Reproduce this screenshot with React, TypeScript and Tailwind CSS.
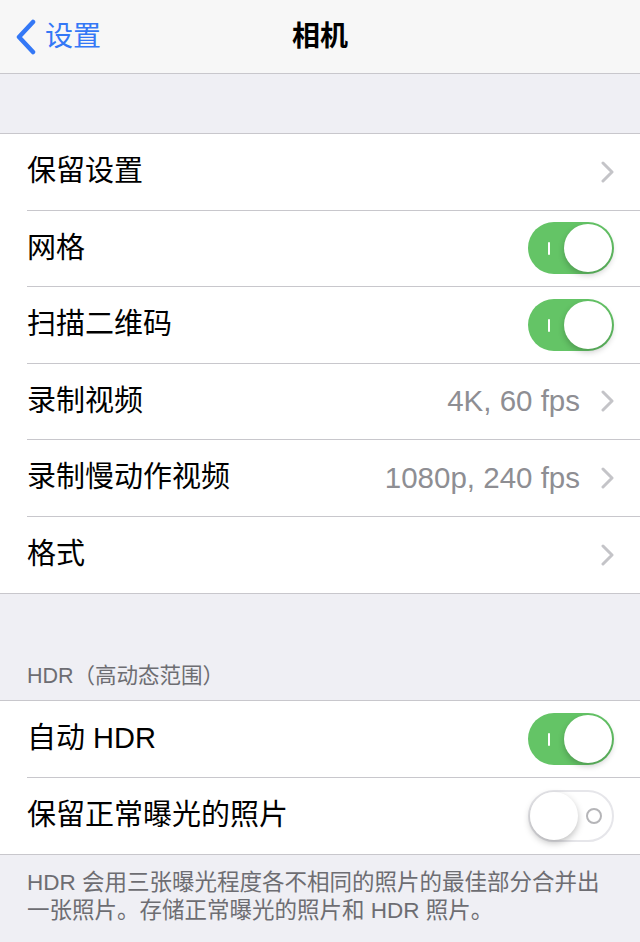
import React from "react";

const font = {
  fontFamily:
    '"Liberation Sans", "Noto Sans CJK SC", "Noto Sans", sans-serif',
};

const Chevron = () => (
  <svg width="13" height="22" viewBox="0 0 13 22" className="ml-[21px]">
    <path
      d="M2 2 L11 11 L2 20"
      fill="none"
      stroke="#c4c4c8"
      strokeWidth="3"
      strokeLinecap="round"
      strokeLinejoin="round"
    />
  </svg>
);

const Toggle = ({ on }: { on: boolean }) =>
  on ? (
    <div className="relative w-[86px] h-[52px] rounded-full bg-[#64c466]">
      <span className="absolute left-[20px] top-[20px] w-[2px] h-[13px] bg-white rounded" />
      <span className="absolute right-[2px] top-[2px] w-[48px] h-[48px] rounded-full bg-white shadow-[0_3px_6px_rgba(0,0,0,0.22)]" />
    </div>
  ) : (
    <div className="relative w-[86px] h-[52px] rounded-full bg-white border-2 border-[#e6e6ea]">
      <span className="absolute left-[56px] top-[16px] w-[16px] h-[16px] rounded-full border-2 border-[#b5b5b8]" />
      <span className="absolute left-0 top-0 w-[48px] h-[48px] rounded-full bg-white shadow-[0_3px_7px_rgba(0,0,0,0.25)]" />
    </div>
  );

type Row = {
  label: string;
  value?: string;
  toggle?: boolean;
  chevron?: boolean;
};

const Group = ({ rows }: { rows: Row[] }) => (
  <div className="bg-white border-y border-[#c8c7cc]">
    {rows.map((r, i) => (
      <div key={i} className="pl-[27px]">
        <div
          className={`h-[76.5px] flex items-center pr-[26px] ${
            i < rows.length - 1 ? "border-b border-[#c8c7cc]" : ""
          }`}
        >
          <span className="text-[29px] text-black flex-1">{r.label}</span>
          {r.value && (
            <span className="text-[29.5px] text-[#8e8e93]">{r.value}</span>
          )}
          {r.chevron && <Chevron />}
          {r.toggle !== undefined && <Toggle on={r.toggle} />}
        </div>
      </div>
    ))}
  </div>
);

export default function App() {
  return (
    <div className="w-[640px] h-[942px] bg-[#efeff4] overflow-hidden" style={font}>
      <header className="h-[74px] bg-[#f7f7f7] border-b border-[#c8c7cc] flex items-center relative">
        <div className="flex items-center pl-[15px] text-[#3478f6]">
          <svg width="22" height="36" viewBox="0 0 22 36">
            <path
              d="M18 3 L4 18 L18 33"
              fill="none"
              stroke="#3478f6"
              strokeWidth="4.5"
              strokeLinecap="round"
              strokeLinejoin="round"
            />
          </svg>
          <span className="text-[28px] ml-[8px]">设置</span>
        </div>
        <h1 className="absolute left-0 right-0 text-center text-[28px] font-bold text-black pointer-events-none">
          相机
        </h1>
      </header>

      <div className="h-[59px]" />

      <Group
        rows={[
          { label: "保留设置", chevron: true },
          { label: "网格", toggle: true },
          { label: "扫描二维码", toggle: true },
          { label: "录制视频", value: "4K, 60 fps", chevron: true },
          { label: "录制慢动作视频", value: "1080p, 240 fps", chevron: true },
          { label: "格式", chevron: true },
        ]}
      />

      <div className="h-[106px] flex items-end pb-[11px] pl-[27px]">
        <span className="text-[21.5px] leading-[26px] text-[#6d6d72]">
          HDR（高动态范围）
        </span>
      </div>

      <Group
        rows={[
          { label: "自动 HDR", toggle: true },
          { label: "保留正常曝光的照片", toggle: false },
        ]}
      />

      <p className="pt-[14px] px-[27px] text-[22.5px] leading-[28px] text-[#6d6d72] whitespace-nowrap">
        HDR 会用三张曝光程度各不相同的照片的最佳部分合并出
        <br />
        一张照片。存储正常曝光的照片和 HDR 照片。
      </p>
    </div>
  );
}
